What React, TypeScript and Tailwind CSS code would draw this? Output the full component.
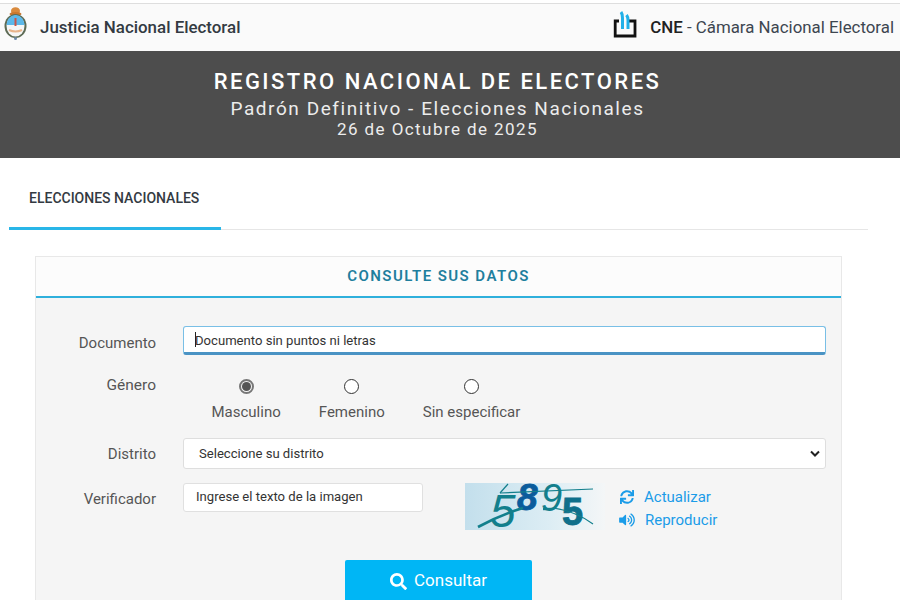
import { FaSearch, FaSync, FaVolumeUp } from "react-icons/fa";

function Escudo() {
  return (
    <svg width="23" height="33" viewBox="0 0 23 33" className="shrink-0 -translate-y-1">
      <ellipse cx="11.5" cy="4" rx="4.5" ry="3.8" fill="#d98a3d" />
      <ellipse cx="11.5" cy="7" rx="6" ry="2" fill="#c9772f" />
      <ellipse cx="11.5" cy="19" rx="11" ry="12" fill="#5d6b55" />
      <ellipse cx="11.5" cy="19" rx="9" ry="10.5" fill="#f6f6f6" />
      <path d="M2.5 18a9 10 0 0 1 18 0z" fill="#5cb8ea" />
      <rect x="10.5" y="11" width="2" height="8" fill="#c8564a" />
      <path d="M5 23q6.5 3 13 0" stroke="#e8b48c" strokeWidth="2" fill="none" />
      <circle cx="11.5" cy="31.5" r="1.5" fill="#6b88a8" />
    </svg>
  );
}

function CneLogo() {
  return (
    <svg width="24" height="27" viewBox="0 0 24 27" className="shrink-0 -translate-y-[3px]">
      <path d="M6 10H2.2V25H22V10H15.5" fill="none" stroke="#111" strokeWidth="2.8" />
      <path d="M8 1Q9.5 3 9.5 7V18" fill="none" stroke="#22b0e8" strokeWidth="3" />
      <path d="M13.5 4Q15 6 15 9V18" fill="none" stroke="#22b0e8" strokeWidth="3" />
    </svg>
  );
}

function Captcha() {
  return (
    <svg width="140" height="47" viewBox="0 0 140 47" className="shrink-0 rounded-sm overflow-visible">
      <defs>
        <linearGradient id="cap" x1="0" x2="1" y1="0" y2="0">
          <stop offset="0" stopColor="#c3dfec" />
          <stop offset="0.6" stopColor="#dcedf4" />
          <stop offset="1" stopColor="#f4f6f7" />
        </linearGradient>
      </defs>
      <rect width="140" height="47" fill="url(#cap)" />
      <text x="25" y="44" fontFamily="'Liberation Sans', sans-serif" fontSize="46" fill="#127f8c" fontStyle="italic">5</text>
      <text x="52" y="27" fontFamily="'Liberation Sans', sans-serif" fontSize="37" fontWeight="700" fontStyle="italic" fill="#0b5c9c" stroke="#0b5c9c" strokeWidth="0.8">8</text>
      <text x="76" y="28" fontFamily="'Liberation Sans', sans-serif" fontSize="38" fontStyle="italic" fill="#127f8c">9</text>
      <text x="97" y="42" fontFamily="'Liberation Sans', sans-serif" fontSize="38" fontWeight="700" fill="#0f6f8a" stroke="#0f6f8a" strokeWidth="0.8">5</text>
      <path d="M35 10 L128 6" stroke="#127f8c" strokeWidth="1.2" />
      <path d="M35 10 L43 1" stroke="#127f8c" strokeWidth="1.2" />
      <path d="M13 44 Q35 32 58 25" stroke="#127f8c" strokeWidth="2.6" fill="none" />
      <path d="M78 26 H88" stroke="#127f8c" strokeWidth="2.4" />
      <path d="M88 25 Q110 28 128 41" stroke="#127f8c" strokeWidth="1.2" fill="none" />
    </svg>
  );
}

function Radio({ label, checked }: { label: string; checked?: boolean }) {
  return (
    <div className="flex flex-col items-center gap-[9px]">
      <span
        className={
          checked
            ? "w-[15px] h-[15px] rounded-full border-2 border-[#777] flex items-center justify-center"
            : "w-[15px] h-[15px] rounded-full border-[1.5px] border-[#333] bg-white"
        }
      >
        {checked && <span className="w-[9px] h-[9px] rounded-full bg-[#555]" />}
      </span>
      <span className="text-[15px] leading-[18px] text-[#555]">{label}</span>
    </div>
  );
}

export default function App() {
  return (
    <div className="w-[900px] h-[600px] overflow-hidden bg-white font-['Roboto',sans-serif] flex flex-col">
      <div className="mt-[3px] h-[48px] shrink-0 bg-[#fafafa] border-t border-[#dedede] flex items-center justify-between pl-1 pr-[6px]">
        <div className="flex items-center gap-[13px]">
          <Escudo />
          <span className="text-[16.9px] font-medium text-[#333a42]">Justicia Nacional Electoral</span>
        </div>
        <div className="flex items-center gap-[13px]">
          <CneLogo />
          <span className="text-[16.85px] text-[#3d4650] mt-[1px]">
            <b className="font-medium text-[#222]">CNE</b> - Cámara Nacional Electoral
          </span>
        </div>
      </div>

      <div className="h-[107px] shrink-0 bg-[#4d4d4d] flex flex-col items-center pt-[17px] text-[#ececec] pr-[25px]">
        <div className="text-[22px] leading-[28px] font-medium tracking-[2.48px] text-white">REGISTRO NACIONAL DE ELECTORES</div>
        <div className="text-[19px] leading-[24px] tracking-[1.56px] mt-[1px]">Padrón Definitivo - Elecciones Nacionales</div>
        <div className="text-[17px] leading-[18px] tracking-[1.43px] -mt-[1px]">26 de Octubre de 2025</div>
      </div>

      <div className="ml-[9px] w-[859px] h-[72px] shrink-0 border-b border-[#e6e6e6] flex">
        <div className="w-[212px] h-[72px] border-b-[3px] border-[#29b6e8] text-[14px] font-medium text-[#333a42] pl-5 pt-[31px] leading-[18px]">
          ELECCIONES NACIONALES
        </div>
      </div>

      <div className="ml-[35px] mt-[26px] w-[807px] flex-1 bg-[#f5f5f5] border border-b-0 border-[#e8e8e8]">
        <div className="h-[41px] bg-[#fcfcfc] border-b-2 border-[#2fb0dc] flex items-center justify-center pb-[1px] text-[15px] font-semibold tracking-[1.44px] text-[#1f7f9e]">
          CONSULTE SUS DATOS
        </div>

        <div className="flex flex-col pr-[15px] pt-[28px]">
          <div className="flex items-center">
            <label className="w-[120px] text-right text-[15px] text-[#555] mt-[6px]">Documento</label>
            <div className="ml-[27px] flex-1 h-[29px] bg-white border border-[#79bfe6] border-b-[3px] border-b-[#4a93c4] rounded-[3px] pl-[11px] text-[13.1px] text-[#333] flex items-center">
              <span className="w-px h-[15px] bg-[#222]" />
              <span className="-ml-px mt-[2px]">Documento sin puntos ni letras</span>
            </div>
          </div>

          <div className="flex mt-[24px]">
            <label className="w-[120px] text-right text-[15.5px] leading-[18px] text-[#555] -mt-[3px]">Género</label>
            <div className="ml-[55.5px] flex gap-[38px]">
              <Radio label="Masculino" checked />
              <Radio label="Femenino" />
              <Radio label="Sin especificar" />
            </div>
          </div>

          <div className="flex items-center mt-[17px]">
            <label className="w-[120px] text-right text-[15px] text-[#555] mt-[2px]">Distrito</label>
            <div className="ml-[27px] flex-1 h-[31px] bg-white border border-[#dedede] rounded-[3px] pl-[15px] pr-[5px] text-[13.1px] text-[#333] flex items-center justify-between">
              <span>Seleccione su distrito</span>
              <svg width="10" height="7" viewBox="0 0 10 7">
                <path d="M1 1.5l4 4 4-4" fill="none" stroke="#222" strokeWidth="2" />
              </svg>
            </div>
          </div>

          <div className="flex mt-[14px]">
            <label className="w-[120px] text-right text-[15px] leading-[18px] text-[#555] mt-[7px]">Verificador</label>
            <div className="ml-[27px] w-[240px] h-[29px] bg-white border border-[#e0e0e0] rounded-[3px] pl-3 text-[13.1px] leading-[26px] text-[#333]">
              Ingrese el texto de la imagen
            </div>
            <div className="ml-[42px]">
              <Captcha />
            </div>
            <div className="ml-[14px] flex flex-col gap-[5px] text-[15px] leading-[18px] text-[#1b9ce8] mt-[5px]">
              <div className="flex items-center gap-[10px] pl-px">
                <FaSync className="w-[14px] h-[14px]" />
                <span>Actualizar</span>
              </div>
              <div className="flex items-center gap-[10px]">
                <FaVolumeUp className="w-[16px] h-[14px]" />
                <span>Reproducir</span>
              </div>
            </div>
          </div>

          <div className="flex justify-center mt-[30px] pl-[15px]">
            <div className="w-[187px] h-[44px] bg-[#00b6f5] rounded-t-[2px] flex items-center justify-center gap-[7px] pb-[2px] text-white text-[17px]">
              <FaSearch className="w-[17px] h-[17px]" />
              <span>Consultar</span>
            </div>
          </div>
        </div>
      </div>
    </div>
  );
}
